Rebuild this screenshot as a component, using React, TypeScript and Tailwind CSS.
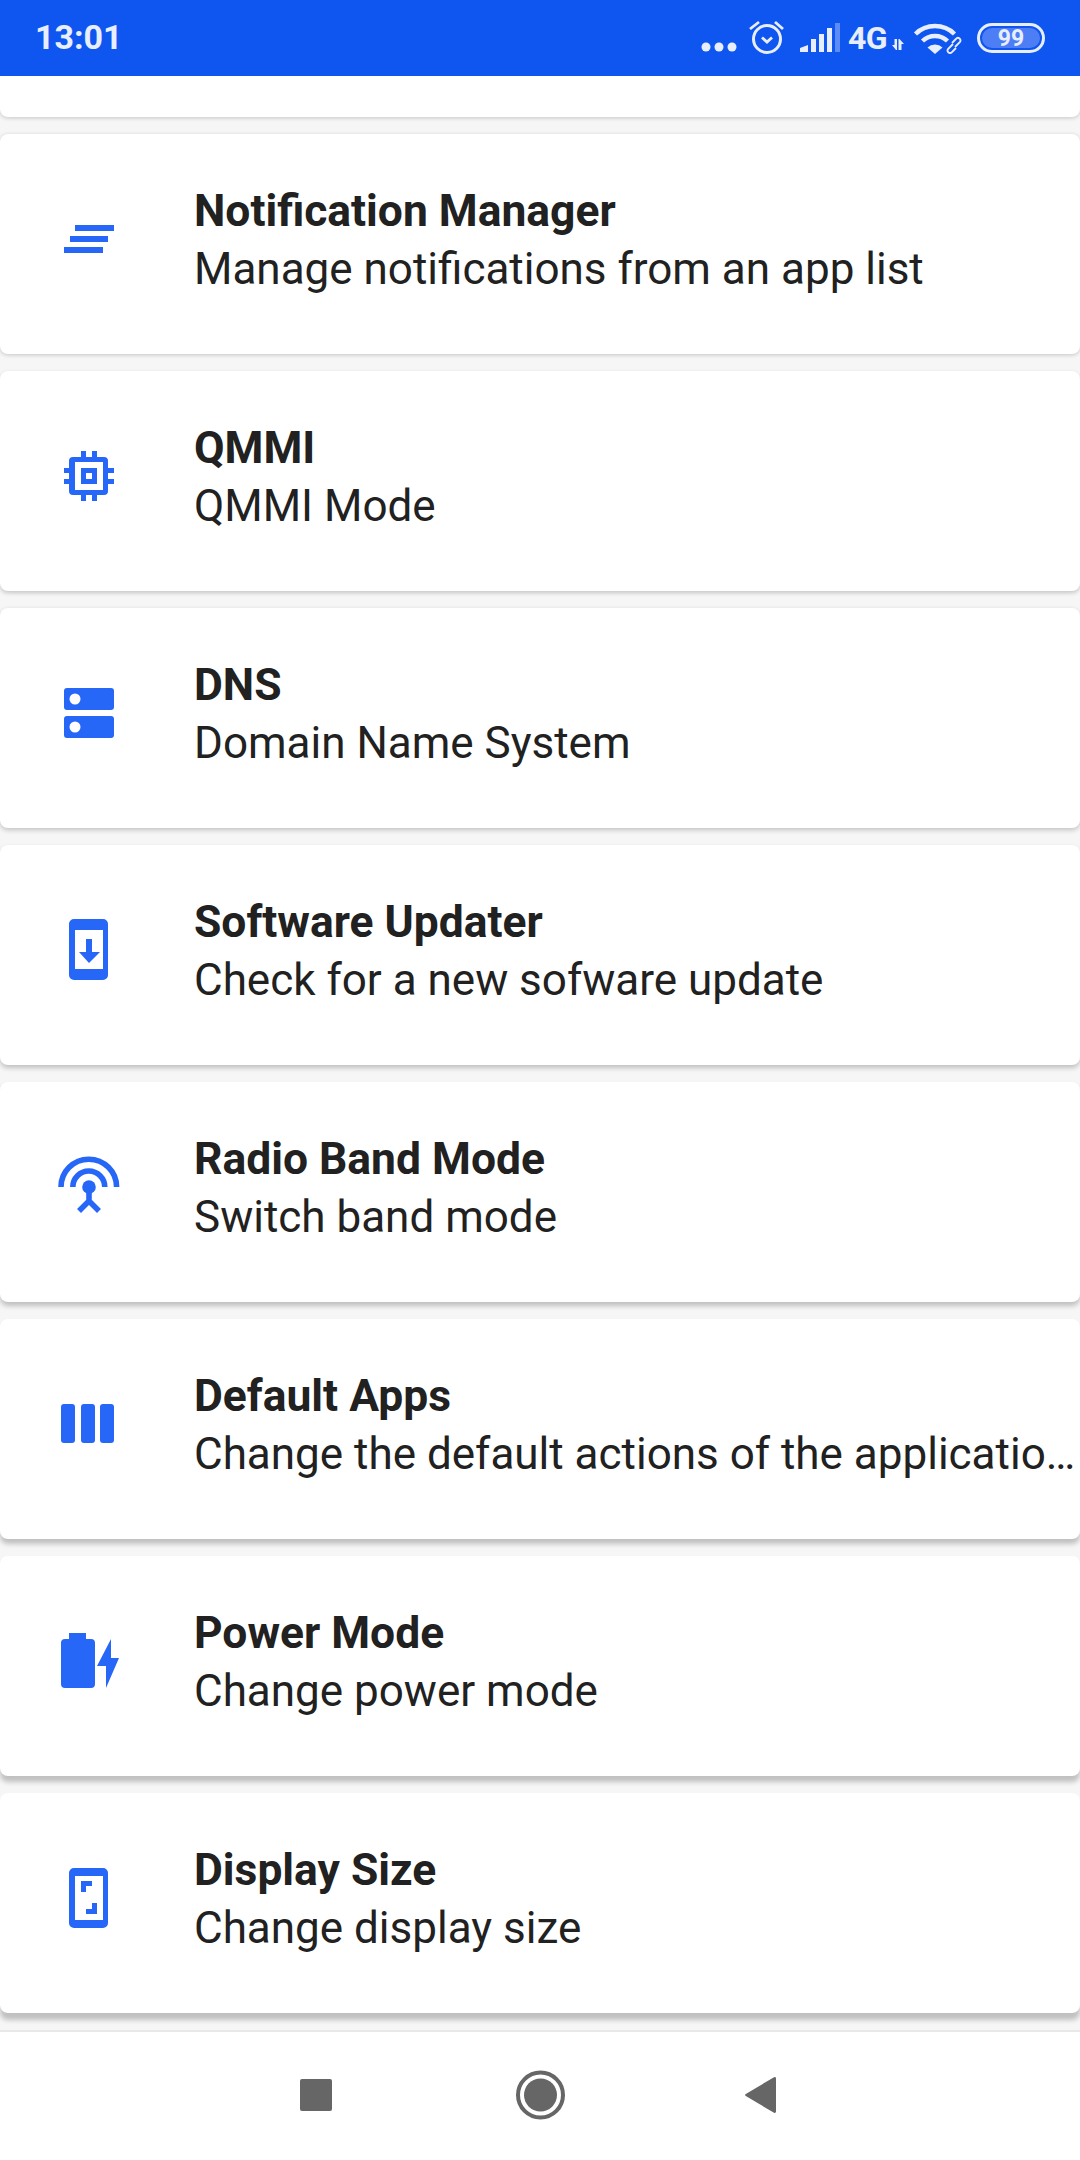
import type { ReactNode } from 'react';

const BLUE = '#2767f7';

function Icon({ children }: { children: ReactNode }) {
	return (
		<svg width="72" height="72" viewBox="0 0 72 72" fill={BLUE} className="shrink-0">
			{children}
		</svg>
	);
}

const NotificationIcon = () => (
	<Icon>
		<rect x="22" y="17" width="39" height="6" />
		<rect x="17" y="28" width="38" height="6" />
		<rect x="11" y="39" width="39" height="6" />
	</Icon>
);

const ChipIcon = () => (
	<Icon>
		<path d="M28 6h5v6h6V6h5v6h7a4 4 0 0 1 4 4v7h6v5h-6v6h6v5h-6v7a4 4 0 0 1-4 4h-7v6h-5v-6h-6v6h-5v-6h-8a4 4 0 0 1-4-4v-7h-5v-5h5v-6h-5v-5h5v-7a4 4 0 0 1 4-4h8z" />
		<rect x="22" y="17" width="28" height="28" fill="#fff" />
		<rect x="28" y="23" width="16" height="16" />
		<rect x="33" y="28" width="6" height="6" fill="#fff" />
	</Icon>
);

const ServerIcon = () => (
	<Icon>
		<rect x="11" y="6" width="50" height="22" rx="3" />
		<rect x="11" y="34" width="50" height="22" rx="3" />
		<circle cx="22" cy="17" r="5.5" fill="#fff" />
		<circle cx="22" cy="45" r="5.5" fill="#fff" />
	</Icon>
);

const UpdateIcon = () => (
	<Icon>
		<path
			fillRule="evenodd"
			d="M21 0h29a5 5 0 0 1 5 5v51a5 5 0 0 1-5 5H21a5 5 0 0 1-5-5V5a5 5 0 0 1 5-5zM22 11v39h28V11z"
		/>
		<path d="M33 20h6v13h8L36 44 26 33h7z" />
	</Icon>
);

const RadioIcon = () => (
	<Icon>
		<g fill="none" stroke={BLUE} strokeWidth="5.6">
			<path d="M8 31a27.8 27.8 0 0 1 55.6 0" />
			<path d="M19.800 31a16 16 0 0 1 32 0" />
			<path d="M36 32v14M36 45L26 55M36 45l10 10" />
		</g>
		<circle cx="36" cy="31" r="6.8" />
	</Icon>
);

const ColumnsIcon = () => (
	<Icon>
		<rect x="8" y="11" width="14" height="39" rx="3" />
		<rect x="28" y="11" width="14" height="39" rx="3" />
		<rect x="47" y="11" width="14" height="39" rx="3" />
	</Icon>
);

const PowerIcon = () => (
	<Icon>
		<path d="M16 3h17v6h5a4 4 0 0 1 4 4v41a4 4 0 0 1-4 4H12a4 4 0 0 1-4-4V13a4 4 0 0 1 4-4h4z" />
		<path d="M58 9L44 36h9v22l13-30h-8z" />
	</Icon>
);

const DisplayIcon = () => (
	<Icon>
		<path
			fillRule="evenodd"
			d="M21 1h29a5 5 0 0 1 5 5v50a5 5 0 0 1-5 5H21a5 5 0 0 1-5-5V6a5 5 0 0 1 5-5zM22 9v44h28V9z"
		/>
		<path d="M28 14h11v5h-6v6h-5zM39 42h-6v5h11V36h-5z" />
	</Icon>
);

const items = [
	{
		title: 'Notification Manager',
		sub: 'Manage notifications from an app list',
		icon: <NotificationIcon />,
		shadow: 'shadow-[0_1px_4px_rgba(0,0,0,0.2)]',
	},
	{ title: 'QMMI', sub: 'QMMI Mode', icon: <ChipIcon />, shadow: 'shadow-[0_2px_4px_rgba(0,0,0,0.2)]' },
	{ title: 'DNS', sub: 'Domain Name System', icon: <ServerIcon />, shadow: 'shadow-[0_2px_5px_rgba(0,0,0,0.22)]' },
	{
		title: 'Software Updater',
		sub: 'Check for a new sofware update',
		icon: <UpdateIcon />,
		shadow: 'shadow-[0_3px_5px_rgba(0,0,0,0.22)]',
	},
	{ title: 'Radio Band Mode', sub: 'Switch band mode', icon: <RadioIcon />, shadow: 'shadow-[0_4px_5px_rgba(0,0,0,0.22)]' },
	{
		title: 'Default Apps',
		sub: 'Change the default actions of the applications',
		icon: <ColumnsIcon />,
		shadow: 'shadow-[0_5px_5px_rgba(0,0,0,0.22)]',
	},
	{ title: 'Power Mode', sub: 'Change power mode', icon: <PowerIcon />, shadow: 'shadow-[0_6px_5px_rgba(0,0,0,0.22)]' },
	{ title: 'Display Size', sub: 'Change display size', icon: <DisplayIcon />, shadow: 'shadow-[0_7px_5px_rgba(0,0,0,0.22)]' },
];

function StatusBar() {
	return (
		<div className="h-[76px] shrink-0 bg-[#0f56f0] flex items-center pl-[35px] pr-[35px] text-[#e8eefd] font-['Roboto',sans-serif]">
			<span className="text-[34px] font-bold leading-none pb-[2px]">13:01</span>
			<div className="ml-auto flex items-center">
				<svg width="144" height="76" viewBox="698 0 144 76" fill="#e8eefd">
					<circle cx="706" cy="47" r="4.500" />
					<circle cx="719" cy="47" r="4.500" />
					<circle cx="732" cy="47" r="4.500" />
					<circle cx="767" cy="39" r="13.500" fill="none" stroke="#e8eefd" strokeWidth="3" />
					<path
						d="M762 37.500l5 4.500 5-4.500M750 29l9-7M775 22l8 7"
						fill="none"
						stroke="#e8eefd"
						strokeWidth="2.800"
					/>
					<path d="M800 52v-4l8-3v7zM811 52V39h5v13zM819 52V34h5v18zM827 52V28h5v24z" />
					<path d="M835 52V23h5v29z" fill="#5e8cf6" />
				</svg>
				<span className="w-[40px] ml-[6px] text-[32px] font-bold leading-none tracking-[-0.5px] pb-[1px]">4G</span>
				<svg width="14" height="76" viewBox="0 0 14 76" className="ml-[3px]" fill="#e8eefd">
					<path d="M3.500 39H6v11H5L1 45h2.500zM7.500 50V39h1l4.500 5h-2.500v6z" />
				</svg>
				<svg width="50" height="76" viewBox="912 0 50 76" className="ml-[7px]">
					<g fill="none" stroke="#e8eefd" strokeWidth="4.500">
						<path d="M915.500 34a28 28 0 0 1 39 0" />
						<path d="M922.500 41a18 18 0 0 1 25 0" />
					</g>
					<path d="M927.500 47.500a11 11 0 0 1 15 0L935 54z" fill="#e8eefd" />
					<g fill="none" stroke="#e8eefd" strokeWidth="1.900">
						<path d="M953 44l-5 5a2.500 2.500 0 0 0 4 3l4-4" />
						<path d="M955 47l5-5a2.500 2.500 0 0 0-4-3l-4 4" />
					</g>
				</svg>
				<div className="ml-[15px] w-[68px] h-[30px] rounded-full border-[3px] border-[#e8eefd] p-[2px]">
					<div className="h-full rounded-full bg-[#4d7ef5] flex items-center justify-center text-[23px] font-bold leading-none">
						99
					</div>
				</div>
			</div>
		</div>
	);
}

function NavBar() {
	return (
		<div className="h-[130px] shrink-0 bg-white border-t-2 border-[#e8e8e8] flex items-center pl-[286px] gap-[165px]">
			<svg width="60" height="60" viewBox="0 0 60 60" fill="#666">
				<rect x="14" y="13" width="32" height="32" rx="2" />
			</svg>
			<svg width="60" height="60" viewBox="0 0 60 60" fill="#666">
				<circle cx="29.500" cy="29" r="22.500" fill="none" stroke="#666" strokeWidth="4" />
				<circle cx="29.500" cy="29" r="16.500" />
			</svg>
			<svg width="60" height="60" viewBox="0 0 60 60" fill="#666">
				<path d="M38 11.200a1.500 1.500 0 0 1 2 1.300v33a1.500 1.500 0 0 1-2 1.300L9.800 30a1.200 1.200 0 0 1 0-2z" />
			</svg>
		</div>
	);
}

export default function App() {
	return (
		<div className="w-[1080px] h-[2160px] flex flex-col overflow-hidden bg-white font-['Roboto',sans-serif]">
			<StatusBar />
			<div className="flex-1 overflow-hidden bg-[#f6f6f6] flex flex-col gap-[17px]">
				<div className="h-[41px] shrink-0 bg-white rounded-b-lg shadow-[0_1px_4px_rgba(0,0,0,0.2)]" />
				{items.map((item) => (
					<div
						key={item.title}
						className={`h-[220px] shrink-0 bg-white rounded-lg flex items-center pl-[53px] pr-[4px] ${item.shadow}`}>
						{item.icon}
						<div className="ml-[69px] min-w-0 flex-1 pb-[9px] text-[#212121]">
							<div className="text-[44.4px] font-bold leading-[58px] truncate">{item.title}</div>
							<div className="text-[44px] leading-[58px] truncate">{item.sub}</div>
						</div>
					</div>
				))}
			</div>
			<NavBar />
		</div>
	);
}
